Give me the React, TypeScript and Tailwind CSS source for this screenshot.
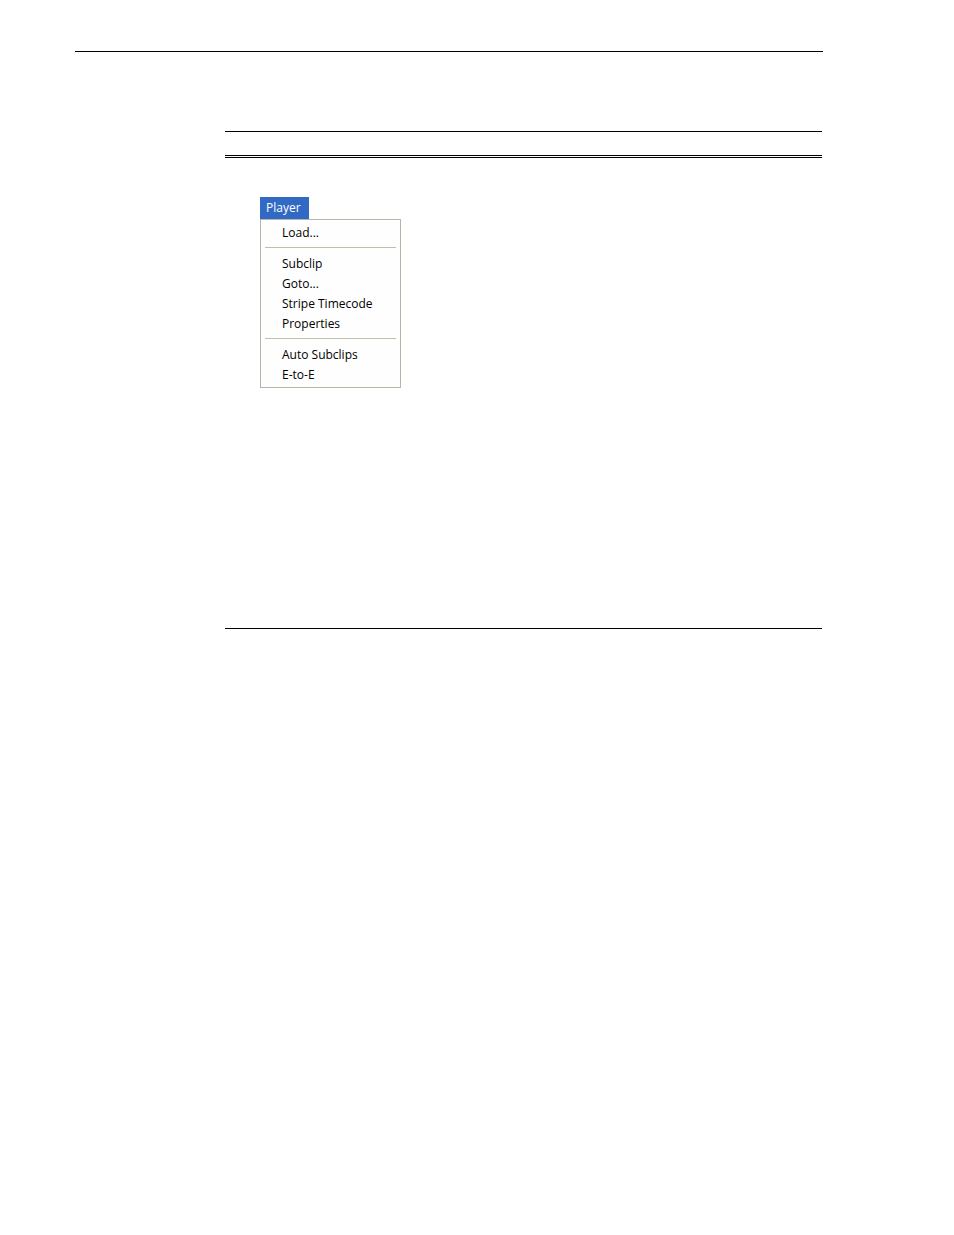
const groups = [
  ["Load..."],
  ["Subclip", "Goto...", "Stripe Timecode", "Properties"],
  ["Auto Subclips", "E-to-E"],
];

function PlayerMenu() {
  return (
    <div className="flex w-[141px] flex-col items-start">
      <button
        type="button"
        aria-haspopup="menu"
        aria-expanded="true"
        className="h-[22px] bg-[#316ac5] pr-2 pl-[6px] leading-5 text-white"
      >
        Player
      </button>
      <div role="menu" aria-label="Player" className="w-full border border-[#b8b5a8] bg-[#fefefe] px-1 pt-[3px] pb-[2px]">
        {groups.map((items, i) => (
          <div key={i} className="flex flex-col">
            {i > 0 && <hr className="mt-1 mb-[6px] border-[#c0bdaa]" />}
            {items.map((item) => (
              <button key={item} type="button" role="menuitem" className="h-5 px-[17px] text-left leading-5">
                {item}
              </button>
            ))}
          </div>
        ))}
      </div>
    </div>
  );
}

export default function App() {
  return (
    <main className="min-h-screen bg-white pt-[51px] pr-[131px] pl-[75px] font-['Open_Sans',sans-serif] text-xs text-black">
      <hr className="border-black" />
      <section className="mt-[79px] mr-px ml-[150px] border-y border-black pb-60">
        <div className="mt-[23px] h-[3px] border-y border-black" />
        <div className="px-[35px] pt-[39px]">
          <PlayerMenu />
        </div>
      </section>
    </main>
  );
}
